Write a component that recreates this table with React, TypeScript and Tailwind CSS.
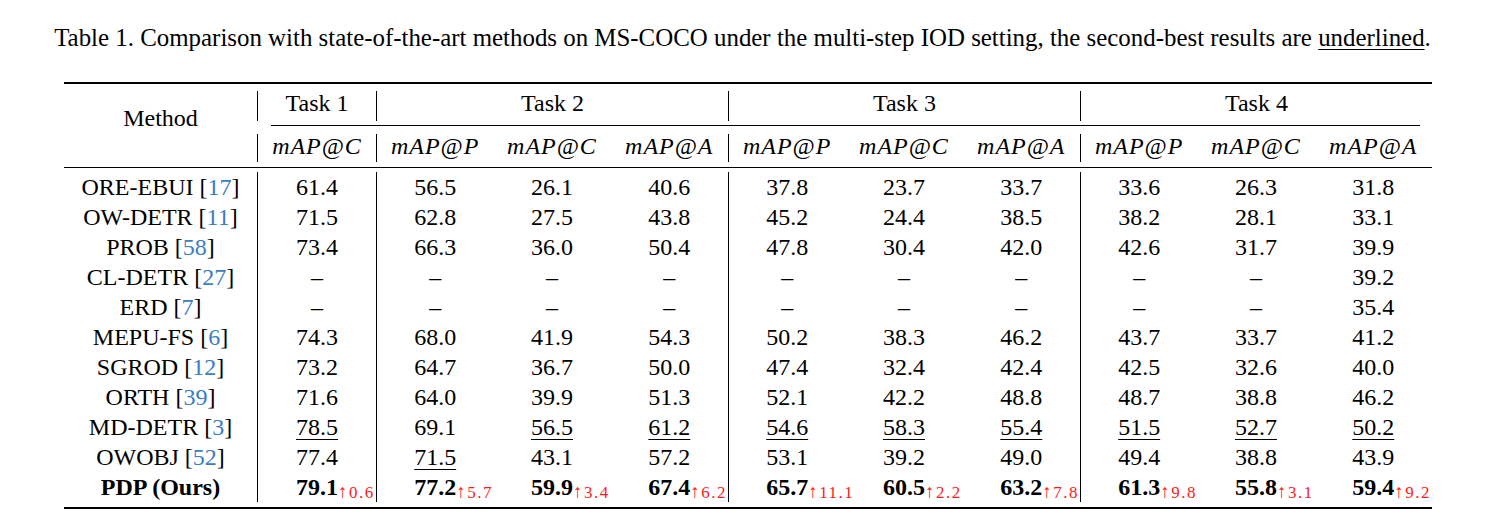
import React from 'react';

type Cell = { v: string; u?: boolean };

const cols = 'grid grid-cols-[193px_119px_repeat(9,117.333px)]';
// columns that start with a vertical bar (0-based)
const barCols = new Set([1, 2, 5, 8]);

const rows: { name: string; cite: string; vals: Cell[] }[] = [
  { name: 'ORE-EBUI', cite: '17', vals: ['61.4', '56.5', '26.1', '40.6', '37.8', '23.7', '33.7', '33.6', '26.3', '31.8'].map((v) => ({ v })) },
  { name: 'OW-DETR', cite: '11', vals: ['71.5', '62.8', '27.5', '43.8', '45.2', '24.4', '38.5', '38.2', '28.1', '33.1'].map((v) => ({ v })) },
  { name: 'PROB', cite: '58', vals: ['73.4', '66.3', '36.0', '50.4', '47.8', '30.4', '42.0', '42.6', '31.7', '39.9'].map((v) => ({ v })) },
  { name: 'CL-DETR', cite: '27', vals: ['–', '–', '–', '–', '–', '–', '–', '–', '–', '39.2'].map((v) => ({ v })) },
  { name: 'ERD', cite: '7', vals: ['–', '–', '–', '–', '–', '–', '–', '–', '–', '35.4'].map((v) => ({ v })) },
  { name: 'MEPU-FS', cite: '6', vals: ['74.3', '68.0', '41.9', '54.3', '50.2', '38.3', '46.2', '43.7', '33.7', '41.2'].map((v) => ({ v })) },
  { name: 'SGROD', cite: '12', vals: ['73.2', '64.7', '36.7', '50.0', '47.4', '32.4', '42.4', '42.5', '32.6', '40.0'].map((v) => ({ v })) },
  { name: 'ORTH', cite: '39', vals: ['71.6', '64.0', '39.9', '51.3', '52.1', '42.2', '48.8', '48.7', '38.8', '46.2'].map((v) => ({ v })) },
  {
    name: 'MD-DETR',
    cite: '3',
    vals: [
      { v: '78.5', u: true },
      { v: '69.1' },
      { v: '56.5', u: true },
      { v: '61.2', u: true },
      { v: '54.6', u: true },
      { v: '58.3', u: true },
      { v: '55.4', u: true },
      { v: '51.5', u: true },
      { v: '52.7', u: true },
      { v: '50.2', u: true },
    ],
  },
  {
    name: 'OWOBJ',
    cite: '52',
    vals: [
      { v: '77.4' },
      { v: '71.5', u: true },
      ...['43.1', '57.2', '53.1', '39.2', '49.0', '49.4', '38.8', '43.9'].map((v) => ({ v })),
    ],
  },
];

const ours = [
  ['79.1', '0.6'],
  ['77.2', '5.7'],
  ['59.9', '3.4'],
  ['67.4', '6.2'],
  ['65.7', '11.1'],
  ['60.5', '2.2'],
  ['63.2', '7.8'],
  ['61.3', '9.8'],
  ['55.8', '3.1'],
  ['59.4', '9.2'],
];

const metrics = ['C', 'P', 'C', 'A', 'P', 'C', 'A', 'P', 'C', 'A'];

function DataCell({ i, children }: { i: number; children: React.ReactNode }) {
  return (
    <div className={`h-[30px] text-center leading-[30px] whitespace-nowrap ${barCols.has(i + 1) ? 'border-l border-black' : ''}`}>
      {children}
    </div>
  );
}

export default function App() {
  return (
    <div className="min-h-[525px] w-[1485px] bg-white [font-family:Liberation_Serif,Times_New_Roman,serif] text-black">
      <p className="pt-[26px] text-center text-[24.9px] leading-none">
        Table 1. Comparison with state-of-the-art methods on MS-COCO under the multi-step IOD setting, the second-best results are{' '}
        <span className="underline decoration-1 underline-offset-[3px]">underlined</span>.
      </p>

      <div className="ml-[64px] mt-[31px] w-[1368px] text-[24px]">
        <div className="h-[2px] bg-black" />

        {/* header */}
        <div className={`${cols} grid-rows-[41px_1px_41px]`}>
          <div className="row-span-3 pt-[22px] text-center leading-none">Method</div>
          <div className="pt-[7px] pb-[4px]">
            <div className="h-full border-l border-black text-center leading-none">Task 1</div>
          </div>
          {['Task 2', 'Task 3', 'Task 4'].map((t) => (
            <div key={t} className="col-span-3 pt-[7px] pb-[4px]">
              <div className="h-full border-l border-black text-center leading-none">{t}</div>
            </div>
          ))}
          <div className="col-span-10 ml-[14px] mr-[12px] bg-black" />
          {metrics.map((m, i) => (
            <div key={i} className="pt-[8px] pb-[5px]">
              <div className={`h-full text-center leading-none italic ${barCols.has(i + 1) ? 'border-l border-black' : ''}`}>
                <span className="tracking-[1px]">mAP@{m}</span>
              </div>
            </div>
          ))}
        </div>

        <div className="h-px bg-black" />

        {/* body */}
        <div className={`${cols} pt-[4px] pb-[5px]`}>
          {rows.map((r) => (
            <React.Fragment key={r.name}>
              <div className="h-[30px] text-center leading-[30px] whitespace-nowrap">
                {r.name} [<span className="text-[#3b7dc3]">{r.cite}</span>]
              </div>
              {r.vals.map((c, i) => (
                <DataCell key={i} i={i}>
                  {c.u ? <span className="underline decoration-1 underline-offset-[4px]">{c.v}</span> : c.v}
                </DataCell>
              ))}
            </React.Fragment>
          ))}
          <div className="h-[30px] text-center leading-[30px] font-bold whitespace-nowrap">PDP (Ours)</div>
          {ours.map(([v, d], i) => (
            <DataCell key={i} i={i}>
              <span className="font-bold">{v}</span>
              <span className="inline-block w-0 overflow-visible align-[-3px] text-[17px] leading-none text-[#ff1a1a]">
                <span className="whitespace-nowrap tracking-[1.5px]">
                  <span className="text-[19px]">↑</span>
                  {d}
                </span>
              </span>
            </DataCell>
          ))}
        </div>

        <div className="h-[2px] bg-black" />
      </div>
    </div>
  );
}
